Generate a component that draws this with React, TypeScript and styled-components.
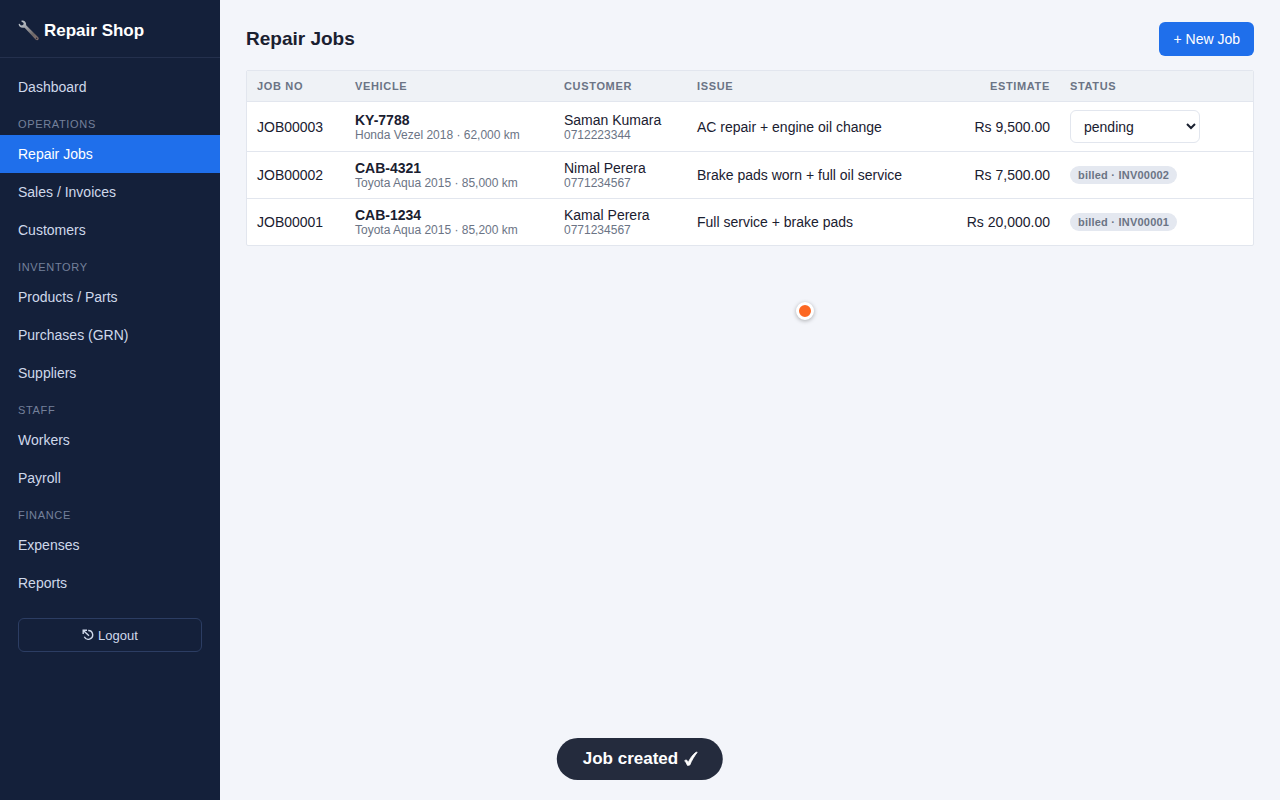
import React, { useState } from "react";
import styled, { createGlobalStyle } from "styled-components";

const GlobalStyle = createGlobalStyle`
  *, *::before, *::after { box-sizing: border-box; }
  body {
    margin: 0;
    background: #f3f5fa;
    color: #1a2030;
    font-family: "Liberation Sans", Helvetica, Arial, sans-serif;
    font-size: 14px;
    line-height: 16px;
  }
  button, select { font-family: inherit; }
`;

const Shell = styled.div`
  display: flex;
  min-height: 100vh;
`;

const Sidebar = styled.aside`
  flex: 0 0 220px;
  background: #14203a;
  color: #cfd8ea;
`;

const Brand = styled.div`
  display: flex;
  align-items: center;
  gap: 5px;
  padding: 20px 18px 16px;
  border-bottom: 1px solid #24304d;
  color: #ffffff;
  font-size: 17px;
  font-weight: 700;
  line-height: 21px;
`;

const Nav = styled.nav`
  padding: 10px 0 16px;
`;

const NavLabel = styled.div`
  padding: 12px 18px 4px;
  color: #74809b;
  font-size: 11px;
  line-height: 13px;
  letter-spacing: 0.06em;
  text-transform: uppercase;
`;

const NavLink = styled.a<{ $active?: boolean }>`
  display: block;
  padding: 11px 18px;
  color: ${(p) => (p.$active ? "#ffffff" : "#cfd8ea")};
  background: ${(p) => (p.$active ? "#1f6feb" : "transparent")};
  text-decoration: none;
`;

const LogoutButton = styled.button`
  display: flex;
  align-items: center;
  justify-content: center;
  gap: 4px;
  width: calc(100% - 36px);
  height: 34px;
  margin: 0 18px;
  border: 1px solid #2c3d63;
  border-radius: 6px;
  background: transparent;
  color: #cfd8ea;
  font-size: 13px;
`;

const Main = styled.main`
  flex: 1;
  min-width: 0;
  padding: 22px 26px;
`;

const PageHeader = styled.header`
  display: flex;
  align-items: center;
  justify-content: space-between;
  margin-bottom: 14px;
`;

const PageTitle = styled.h1`
  margin: 0;
  font-size: 19px;
  line-height: 24px;
`;

const PrimaryButton = styled.button`
  height: 34px;
  padding: 0 14px;
  border: 0;
  border-radius: 6px;
  background: #1f6feb;
  color: #ffffff;
  font-size: 14px;
`;

const TableCard = styled.div`
  overflow: hidden;
  border: 1px solid #e2e6ee;
  border-radius: 2px;
  background: #ffffff;
`;

const Table = styled.table`
  width: 100%;
  table-layout: fixed;
  border-spacing: 0;

  tr:last-child td { border-bottom: 0; }
`;

const Col = styled.col<{ $width?: number }>`
  width: ${(p) => (p.$width ? `${p.$width}px` : "auto")};
`;

const HeadCell = styled.th<{ $right?: boolean }>`
  padding: 8px 10px;
  border-bottom: 1px solid #e2e6ee;
  background: #eff2f6;
  color: #6b7485;
  font-size: 11px;
  line-height: 14px;
  letter-spacing: 0.06em;
  text-align: ${(p) => (p.$right ? "right" : "left")};
  text-transform: uppercase;
`;

const Cell = styled.td<{ $right?: boolean }>`
  padding: 8px 10px;
  border-bottom: 1px solid #e2e6ee;
  text-align: ${(p) => (p.$right ? "right" : "left")};
  vertical-align: middle;
`;

const Strong = styled.strong`
  display: block;
`;

const Sub = styled.div`
  color: #6b7485;
  font-size: 12px;
  line-height: 14px;
`;

const StatusSelect = styled.select`
  display: block;
  width: 130px;
  height: 33px;
  padding: 0 9px;
  border: 1px solid #e2e6ee;
  border-radius: 6px;
  background: #ffffff;
  color: #1a2030;
  font-size: 14px;
`;

const Badge = styled.span`
  display: inline-block;
  padding: 2px 8px;
  border-radius: 10px;
  background: #e4e8f0;
  color: #6b7485;
  font-size: 11px;
  font-weight: 700;
  line-height: 14px;
  letter-spacing: 0.02em;
  vertical-align: middle;
`;

const Toast = styled.div`
  position: fixed;
  bottom: 20px;
  left: 50%;
  transform: translateX(-50%);
  display: flex;
  align-items: center;
  gap: 6px;
  padding: 11px 25px 11px 26px;
  border-radius: 21px;
  background: #242b3d;
  color: #ffffff;
  font-size: 17px;
  font-weight: 700;
  line-height: 20px;
  white-space: nowrap;
`;

const Pointer = styled.div`
  position: fixed;
  top: 302px;
  left: 796px;
  width: 18px;
  height: 18px;
  border: 3px solid #ffffff;
  border-radius: 50%;
  background: #fc6722;
  box-shadow: 0 1px 4px rgba(0, 0, 0, 0.3);
  pointer-events: none;
`;

const WrenchIcon = () => (
  <svg width="21" height="21" viewBox="0 0 21 21" aria-hidden="true">
    <defs>
      <linearGradient id="steel" x1="0" y1="0" x2="1" y2="1">
        <stop offset="0" stopColor="#c3ccd3" />
        <stop offset="0.35" stopColor="#a3a6ad" />
        <stop offset="0.7" stopColor="#6d6767" />
        <stop offset="1" stopColor="#8a7470" />
      </linearGradient>
    </defs>
    <path
      d="M3.400 0.700C5.400 0 7.500 1.200 8 3.300c.2.900 0 1.700.4 2.300L20 17.100c.9 1 .9 2 .2 2.700-.7.700-1.800.6-2.600-.3L6.900 8c-.6-.5-1.300-.1-2.200-.2C2.500 7.600.700 6 .6 3.900l.9-.2L3 5.600l2.200-.5.5-2.100L3.400 1.500z"
      fill="url(#steel)"
    />
    <circle cx="18.600" cy="18.400" r="0.800" fill="#2b2c3a" />
  </svg>
);

const EscapeIcon = () => (
  <svg width="12" height="12" viewBox="0 0 12 12" fill="none" stroke="currentColor" strokeWidth="1.400" aria-hidden="true">
    <path d="M6.200 1.500A4.400 4.400 0 1 1 2.300 7.800" />
    <path d="M7 6.800 1.600 1.700M1.200 5V1.300H5" />
  </svg>
);

const CheckIcon = () => (
  <svg width="14" height="16" viewBox="0 0 14 16" role="img" aria-label="done">
    <path
      d="M.9 9.700c.9-.9 2.100-.9 2.700.2l.8 1.700C6 7.800 8.900 3.600 12.300 1.200h1.200C10.600 4.900 8 9.200 6 14c-.7.400-1.700.5-2.300.4C2.900 12.700 2.200 11 .9 9.700z"
      fill="currentColor"
      stroke="currentColor"
      strokeWidth="0.800"
      strokeLinejoin="round"
    />
  </svg>
);

const sections = [
  { label: "", items: ["Dashboard"] },
  { label: "Operations", items: ["Repair Jobs", "Sales / Invoices", "Customers"] },
  { label: "Inventory", items: ["Products / Parts", "Purchases (GRN)", "Suppliers"] },
  { label: "Staff", items: ["Workers", "Payroll"] },
  { label: "Finance", items: ["Expenses", "Reports"] },
];

const jobs = [
  { no: "JOB00003", plate: "KY-7788", car: "Honda Vezel 2018 · 62,000 km", name: "Saman Kumara", phone: "0712223344", issue: "AC repair + engine oil change", estimate: "Rs 9,500.00", invoice: "" },
  { no: "JOB00002", plate: "CAB-4321", car: "Toyota Aqua 2015 · 85,000 km", name: "Nimal Perera", phone: "0771234567", issue: "Brake pads worn + full oil service", estimate: "Rs 7,500.00", invoice: "INV00002" },
  { no: "JOB00001", plate: "CAB-1234", car: "Toyota Aqua 2015 · 85,200 km", name: "Kamal Perera", phone: "0771234567", issue: "Full service + brake pads", estimate: "Rs 20,000.00", invoice: "INV00001" },
];

export default function App() {
  const [status, setStatus] = useState("pending");

  return (
    <>
      <GlobalStyle />
      <Shell>
        <Sidebar>
          <Brand>
            <WrenchIcon />
            Repair Shop
          </Brand>
          <Nav>
            {sections.map((section) => (
              <React.Fragment key={section.label}>
                {section.label && <NavLabel>{section.label}</NavLabel>}
                {section.items.map((item) => (
                  <NavLink key={item} href="#" $active={item === "Repair Jobs"}>
                    {item}
                  </NavLink>
                ))}
              </React.Fragment>
            ))}
          </Nav>
          <LogoutButton type="button">
            <EscapeIcon />
            Logout
          </LogoutButton>
        </Sidebar>
        <Main>
          <PageHeader>
            <PageTitle>Repair Jobs</PageTitle>
            <PrimaryButton type="button">+ New Job</PrimaryButton>
          </PageHeader>
          <TableCard>
            <Table>
              <colgroup>
                <Col $width={98} />
                <Col $width={209} />
                <Col $width={133} />
                <Col />
                <Col $width={120} />
                <Col $width={193} />
              </colgroup>
              <thead>
                <tr>
                  <HeadCell>Job No</HeadCell>
                  <HeadCell>Vehicle</HeadCell>
                  <HeadCell>Customer</HeadCell>
                  <HeadCell>Issue</HeadCell>
                  <HeadCell $right>Estimate</HeadCell>
                  <HeadCell>Status</HeadCell>
                </tr>
              </thead>
              <tbody>
                {jobs.map((job) => (
                  <tr key={job.no}>
                    <Cell>{job.no}</Cell>
                    <Cell>
                      <Strong>{job.plate}</Strong>
                      <Sub>{job.car}</Sub>
                    </Cell>
                    <Cell>
                      {job.name}
                      <Sub>{job.phone}</Sub>
                    </Cell>
                    <Cell>{job.issue}</Cell>
                    <Cell $right>{job.estimate}</Cell>
                    <Cell>
                      {job.invoice ? (
                        <Badge>billed · {job.invoice}</Badge>
                      ) : (
                        <StatusSelect
                          aria-label={`Status of ${job.no}`}
                          value={status}
                          onChange={(e) => setStatus(e.target.value)}
                        >
                          <option>pending</option>
                          <option>in progress</option>
                          <option>completed</option>
                        </StatusSelect>
                      )}
                    </Cell>
                  </tr>
                ))}
              </tbody>
            </Table>
          </TableCard>
        </Main>
      </Shell>
      <Pointer />
      <Toast role="status">
        Job created
        <CheckIcon />
      </Toast>
    </>
  );
}
